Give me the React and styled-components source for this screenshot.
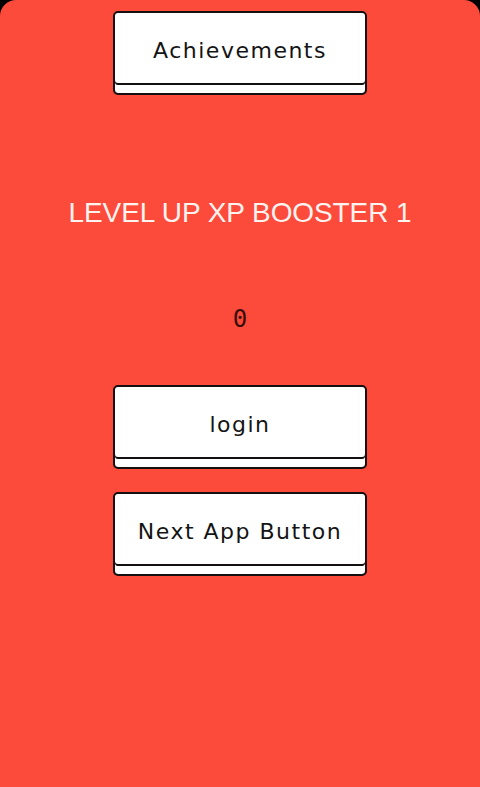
import React from "react";
import styled, { createGlobalStyle } from "styled-components";

const Global = createGlobalStyle`
  html, body { margin: 0; padding: 0; background: #000; }
  body { width: 480px; height: 787px; overflow: hidden; }
`;

const Screen = styled.div`
  width: 480px;
  height: 787px;
  box-sizing: border-box;
  background: #fc4a3b;
  border-radius: 16px 16px 0 0;
  display: flex;
  flex-direction: column;
  align-items: center;
  padding-top: 11px;
`;

const PixelButton = styled.button`
  width: 254px;
  height: 84px;
  box-sizing: border-box;
  margin-top: ${(p) => p.$gap || 0}px;
  border: 2px solid #141010;
  border-radius: 5px;
  background: #fff;
  box-shadow: inset 0 -8px 0 #fff, inset 0 -10px 0 #141010;
  padding: 0 0 5px 0;
  display: flex;
  align-items: center;
  justify-content: center;
  font-family: "DejaVu Sans", sans-serif;
  font-size: 22px;
  letter-spacing: 1.5px;
  color: #141414;
  cursor: pointer;
`;

const Title = styled.div`
  margin-top: 102px;
  font-family: "Liberation Sans", sans-serif;
  font-size: 28px;
  line-height: 32px;
  letter-spacing: -0.1px;
  color: #fff3f0;
  white-space: nowrap;
`;

const Counter = styled.div`
  margin-top: 77px;
  font-family: "DejaVu Sans Mono", monospace;
  font-size: 24px;
  line-height: 26px;
  color: #3a0d0a;
`;

export default function App() {
  return (
    <>
      <Global />
      <Screen>
        <PixelButton>Achievements</PixelButton>
        <Title>LEVEL UP XP BOOSTER 1</Title>
        <Counter>0</Counter>
        <PixelButton $gap={53}>login</PixelButton>
        <PixelButton $gap={23}>Next App Button</PixelButton>
      </Screen>
    </>
  );
}
